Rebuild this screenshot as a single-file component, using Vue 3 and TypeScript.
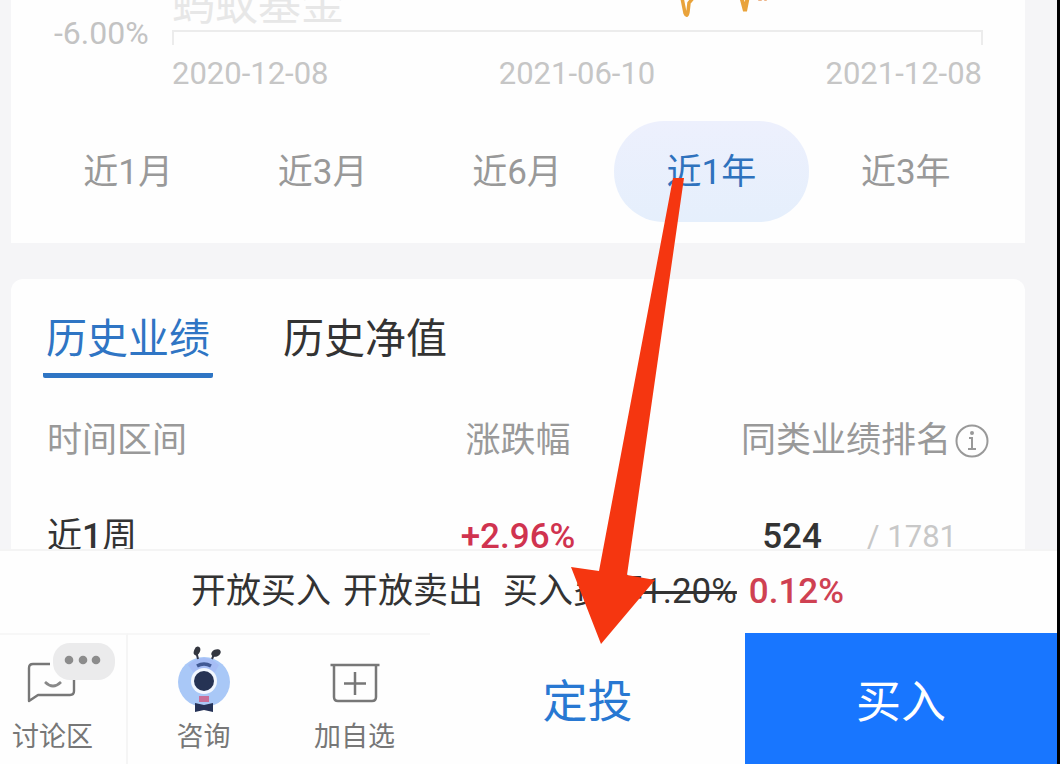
<script setup lang="ts">
import { ref } from 'vue'

interface Performance {
  period: [string, string, string]
  change: string
  rank: number
  total: number
}

const dates: string[] = ['2020-12-08', '2021-06-10', '2021-12-08']
const periods: string[] = ['近1月', '近3月', '近6月', '近1年', '近3年']
const tabs: string[] = ['历史业绩', '历史净值']
const rows: Performance[] = [
  { period: ['近', '1', '周'], change: '+2.96%', rank: 524, total: 1781 },
]

const activePeriod = ref('近1年')
const activeTab = ref('历史业绩')
</script>

<template>
  <div class="page">
    <main class="content">
      <section class="card chart-card">
        <div class="chart">
          <span class="y-label">-6.00%</span>
          <div class="plot">
            <div class="canvas">
              <span class="watermark">蚂蚁基金</span>
              <svg class="curve" viewBox="0 0 100 24" fill="none" stroke-linecap="round" aria-hidden="true">
                <path d="M7 -2L10 13Q12 18 13 12L14 3L18 -2" stroke="#e9a33b" stroke-width="3.500" />
                <path d="M66 -4L70 11L73 -4" stroke="#e9a33b" stroke-width="4" />
                <path d="M84 0h2M90 0h1" stroke="#edb489" stroke-width="2" />
              </svg>
            </div>
            <div class="axis"></div>
          </div>
        </div>
        <div class="dates">
          <span v-for="date in dates" :key="date">{{ date }}</span>
        </div>
        <div class="periods">
          <button
            v-for="period in periods"
            :key="period"
            type="button"
            :class="{ active: period === activePeriod }"
            @click="activePeriod = period"
          >{{ period }}</button>
        </div>
      </section>

      <section class="card history-card">
        <nav class="tabs">
          <button
            v-for="tab in tabs"
            :key="tab"
            type="button"
            :class="{ active: tab === activeTab }"
            @click="activeTab = tab"
          >{{ tab }}</button>
        </nav>
        <table>
          <thead>
            <tr>
              <th class="range">时间区间</th>
              <th class="change">涨跌幅</th>
              <th class="rank">
                <span class="rank-head">同类业绩排名<button type="button" class="info" aria-label="排名说明">
                  <svg viewBox="0 0 34 34" fill="none" stroke="#999" stroke-width="2" aria-hidden="true">
                    <circle cx="17" cy="17" r="15.5" />
                    <path d="M14 14h3v11M13 25h8" />
                    <circle cx="17" cy="9" r="1" fill="#999" />
                  </svg>
                </button></span>
              </th>
            </tr>
          </thead>
          <tbody>
            <tr v-for="row in rows" :key="row.rank">
              <td class="range">{{ row.period[0] }}<b>{{ row.period[1] }}</b>{{ row.period[2] }}</td>
              <td class="change">{{ row.change }}</td>
              <td class="rank">
                <span class="rank-value"><b>{{ row.rank }}</b><span>/ {{ row.total }}</span></span>
              </td>
            </tr>
          </tbody>
        </table>
      </section>
    </main>

    <footer>
      <p class="notice">
        <span>开放买入</span>
        <span>开放卖出</span>
        <span class="fee">买入费率<s>1.20%</s></span>
        <strong>0.12%</strong>
      </p>
      <div class="actions">
        <button type="button" class="tool discuss">
          <svg width="90" height="64" viewBox="0 0 90 64" fill="none" aria-hidden="true">
            <path d="M42 17H25q-4 0-4 4v33l9-6h32q4 0 4-4V30" stroke="#777" stroke-width="2.4" stroke-linejoin="round" />
            <path d="M37 35q8 8 16 0" stroke="#888" stroke-width="2.6" />
            <rect x="45" y="-4" width="62" height="37" rx="17" fill="#ebebec" />
            <g fill="#8c8c8c"><circle cx="61" cy="13" r="4.3" /><circle cx="75" cy="13" r="4.3" /><circle cx="88" cy="13" r="4.3" /></g>
          </svg>
          <span>讨论区</span>
        </button>
        <button type="button" class="tool">
          <svg width="90" height="64" viewBox="0 0 90 64" fill="none" aria-hidden="true">
            <ellipse cx="45" cy="35" rx="26" ry="25" fill="#a9c8f7" />
            <path d="M29 18q16-14 31 0l-4 7H34z" fill="#a6bdf5" />
            <path d="M39 12L37 4M53 12L56 5" stroke="#33384a" stroke-width="2" />
            <ellipse cx="38" cy="4" rx="3" ry="4.500" fill="#33363f" transform="rotate(22 38 4)" />
            <ellipse cx="57" cy="6" rx="5" ry="3.500" fill="#33363f" transform="rotate(-25 57 6)" />
            <path d="M38 19q7-4 14 0" stroke="#415994" stroke-width="3.4" />
            <circle cx="45" cy="34" r="13" fill="#f2f7ff" />
            <circle cx="45" cy="34" r="10" fill="#263354" />
            <path d="M40 49h10v6H40z" fill="#c96f99" />
            <path d="M36 56l9 2 9-2v9l-9-2-9 2z" fill="#253257" />
          </svg>
          <span>咨询</span>
        </button>
        <button type="button" class="tool">
          <svg width="90" height="64" viewBox="0 0 90 64" fill="none" stroke="#777" stroke-width="2.5" aria-hidden="true">
            <path d="M20.500 18h49M24 18v32q0 4 4 4h34q4 0 4-4V18M45 25v23M34 36.500h22" />
          </svg>
          <span>加自选</span>
        </button>
        <button type="button" class="invest">定投</button>
        <button type="button" class="buy">买入</button>
      </div>
    </footer>

    <svg class="pointer" width="90" height="470" viewBox="0 0 90 470" aria-hidden="true">
      <path d="M103 4L114 4L57 401L85 406L31 470L1 393L29 397Z" fill="#f53610" />
    </svg>
  </div>
</template>

<style>
body {
  margin: 0;
}
</style>

<style scoped>
.page {
  position: relative;
  display: flex;
  flex-direction: column;
  box-sizing: border-box;
  height: 100vh;
  overflow: hidden;
  border-right: 3px solid #000;
  background: #f5f5f7;
  color: #333;
  font-family: Roboto, "Noto Sans CJK SC", sans-serif;
  font-size: 35px;
}

button {
  margin: 0;
  padding: 0;
  border: 0;
  background: none;
  color: inherit;
  font: inherit;
  cursor: pointer;
}

.content {
  display: flex;
  flex: 1;
  flex-direction: column;
  gap: 36px;
  min-height: 0;
  overflow: hidden;
  padding: 0 32px 0 11px;
}

.card {
  flex: none;
  background: #fefefe;
}

.chart-card {
  padding-bottom: 21px;
}

.chart {
  display: flex;
  height: 45px;
  padding: 0 42px 0 43px;
}

.y-label {
  width: 118px;
  padding-top: 15px;
  color: #c3c3c3;
  font-size: 32px;
  line-height: 36px;
}

.plot {
  flex: 1;
}

.canvas {
  position: relative;
  display: flex;
  align-items: flex-end;
  height: 30px;
  overflow: hidden;
}

.watermark {
  color: #e7e7e7;
  font-size: 43px;
  line-height: 60px;
  margin-bottom: -5px;
}

.curve {
  position: absolute;
  top: 0;
  left: 62%;
  width: 100px;
  height: 24px;
}

.axis {
  box-sizing: border-box;
  height: 15px;
  border: 2px solid #ececec;
  border-bottom: 0;
}

.dates {
  display: flex;
  justify-content: space-between;
  padding: 11px 43px 0 161px;
  color: #c6c6c6;
  font-size: 31px;
  line-height: 36px;
}

.periods {
  display: grid;
  grid-template-columns: repeat(5, 1fr);
  padding: 29px 22px 0 20px;
  color: #999;
}

.periods button {
  height: 101px;
  border-radius: 50px;
  padding-bottom: 7px;
}

.periods .active {
  background: linear-gradient(#edf0fd, #e5effc);
  color: #2f72bd;
}

.history-card {
  border-radius: 12px 12px 0 0;
  padding: 30px 36px 0;
}

.tabs {
  display: flex;
  gap: 67px;
  margin-left: -4px;
  font-size: 41px;
  line-height: 60px;
}

.tabs button {
  border-bottom: 5px solid transparent;
  border-radius: 2px;
  padding: 0 3px 4px;
}

.tabs .active {
  border-color: #2f75c4;
  color: #2f75c4;
}

table {
  width: 100%;
  margin-top: 33px;
  border-collapse: collapse;
  table-layout: fixed;
}

th,
td {
  padding: 0;
  line-height: 60px;
  white-space: nowrap;
}

th {
  color: #999;
  font-weight: 400;
}

td {
  padding-top: 36px;
}

.range {
  width: 39%;
  text-align: left;
}

.change {
  width: 22%;
  text-align: center;
}

td.change {
  color: #d0334f;
  font-weight: 500;
}

.rank {
  text-align: right;
}

.rank-head {
  display: flex;
  align-items: center;
  justify-content: flex-end;
  gap: 4px;
}

.info,
.info svg {
  display: block;
  width: 34px;
  height: 34px;
}

.rank-value {
  display: flex;
  justify-content: flex-end;
  gap: 45px;
  padding-right: 32px;
}

.rank-value span {
  color: #c8c8c8;
  font-size: 31px;
}

b {
  font-weight: 500;
}

footer {
  flex: none;
  background: #fefefe;
  border-top: 2px solid #f4f4f4;
}

.notice {
  display: flex;
  justify-content: center;
  gap: 12px;
  margin: 0;
  padding-right: 22px;
  line-height: 82px;
  white-space: nowrap;
}

.fee {
  padding-left: 8px;
}

.notice strong {
  color: #cf4152;
  font-weight: 500;
}

.actions {
  display: grid;
  grid-template-columns: 128fr 151fr 151fr 315fr 312fr;
  height: 131px;
}

.tool {
  display: flex;
  flex-direction: column;
  align-items: center;
  gap: 7px;
  border-top: 2px solid #f7f7f7;
  padding-top: 12px;
  color: #777;
  font-size: 27px;
  line-height: 38px;
}

.tool svg {
  flex: none;
  overflow: visible;
}

.discuss {
  border-right: 2px solid #f5f5f5;
  padding-right: 21px;
}

.invest,
.buy {
  font-size: 45px;
}

.invest {
  color: #2878d2;
}

.buy {
  background: #1876ff;
  color: #fff;
}

.pointer {
  position: absolute;
  top: 174px;
  left: 570px;
  overflow: visible;
  pointer-events: none;
}
</style>
